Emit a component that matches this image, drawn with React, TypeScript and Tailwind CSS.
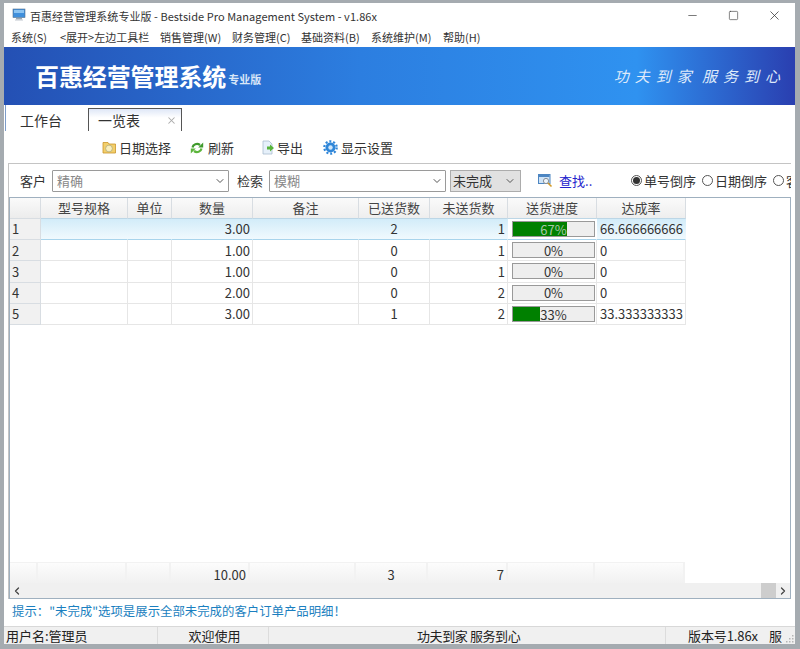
import { Minus, Square, X, ChevronDown, ChevronLeft, ChevronRight } from 'lucide-react';

const rows = [
  { no: 1, qty: '3.00', sent: 2, left: 1, pct: 67, rate: '66.666666666' },
  { no: 2, qty: '1.00', sent: 0, left: 1, pct: 0, rate: '0' },
  { no: 3, qty: '1.00', sent: 0, left: 1, pct: 0, rate: '0' },
  { no: 4, qty: '2.00', sent: 0, left: 2, pct: 0, rate: '0' },
  { no: 5, qty: '3.00', sent: 1, left: 2, pct: 33, rate: '33.333333333' },
];

const headers = ['型号规格', '单位', '数量', '备注', '已送货数', '未送货数', '送货进度', '达成率'];
const menus = [
  ['系统(S)', 'w-[49px]'],
  ['<展开>左边工具栏', 'w-[100px]'],
  ['销售管理(W)', 'w-[72px]'],
  ['财务管理(C)', 'w-[69px]'],
  ['基础资料(B)', 'w-[70px]'],
  ['系统维护(M)', 'w-[72px]'],
  ['帮助(H)', 'w-[50px]'],
];

const gridCols = 'grid grid-cols-[31px_87px_44px_81px_106px_71px_78px_89px_89px]';

function MonitorIcon() {
  return (
    <svg width="14" height="14" viewBox="0 0 14 14">
      <rect x="1" y="1" width="12" height="8.5" fill="#3f8fdc" stroke="#55708c" strokeWidth="0.6" />
      <rect x="2" y="2" width="10" height="3" fill="#8cc4f2" />
      <rect x="4" y="10" width="6" height="1.5" fill="#9aa7b4" />
      <rect x="3" y="11.5" width="8" height="1" fill="#c1c8cf" />
    </svg>
  );
}

function FolderIcon() {
  return (
    <svg width="15" height="15" viewBox="0 0 15 15">
      <path d="M1 2.5h5l1 1.5h6.5V13H1z" fill="#f3cf6a" stroke="#c9962c" strokeWidth="0.8" />
      <circle cx="7" cy="8.5" r="3.4" fill="#f9eebc" stroke="#b0a878" strokeWidth="0.8" />
    </svg>
  );
}

function RefreshIcon() {
  return (
    <svg width="14" height="14" viewBox="0 0 14 14" fill="none">
      <path d="M2.5 6.5C3 3.5 7 1.8 10 4" stroke="#3f9a2c" strokeWidth="2.2" />
      <path d="M8.2 6.5h5V1.5z" fill="#3f9a2c" />
      <path d="M11.5 7.5C11 10.5 7 12.2 4 10" stroke="#5cb53c" strokeWidth="2.2" />
      <path d="M5.8 7.5h-5v5z" fill="#5cb53c" />
    </svg>
  );
}

function ExportIcon() {
  return (
    <svg width="14" height="15" viewBox="0 0 14 15">
      <path d="M2 1h6l3 3v10H2z" fill="#e6f0fa" stroke="#a9bccf" strokeWidth="0.8" />
      <path d="M6 6.5h3V4.5l4 3.5-4 3.5v-2H6z" fill="#57b43a" />
    </svg>
  );
}

function GearIcon() {
  return (
    <svg width="15" height="15" viewBox="0 0 15 15">
      <circle cx="7.5" cy="7.5" r="5" fill="#2f86d8" />
      <circle cx="7.5" cy="7.5" r="6.2" fill="none" stroke="#2f86d8" strokeWidth="2.2" strokeDasharray="2 1.9" />
      <circle cx="7.5" cy="7.5" r="2.2" fill="#cfe6fa" />
    </svg>
  );
}

function FindIcon() {
  return (
    <svg width="15" height="15" viewBox="0 0 15 15" fill="none">
      <rect x="0.5" y="1.5" width="11.5" height="9" fill="#cfe3f6" stroke="#4d86c2" />
      <rect x="1" y="2" width="10.5" height="2" fill="#4d86c2" />
      <circle cx="8" cy="8" r="2.6" fill="#eef6fc" stroke="#8a8f96" />
      <path d="M10 10l3.5 3.5" stroke="#d49a2a" strokeWidth="1.6" />
    </svg>
  );
}

function SizeGrip() {
  return (
    <svg width="8" height="8" viewBox="0 0 8 8" fill="#b5b5b5">
      <rect x="6" y="0" width="1.5" height="1.5" />
      <rect x="3" y="3" width="1.5" height="1.5" />
      <rect x="6" y="3" width="1.5" height="1.5" />
      <rect x="0" y="6" width="1.5" height="1.5" />
      <rect x="3" y="6" width="1.5" height="1.5" />
      <rect x="6" y="6" width="1.5" height="1.5" />
    </svg>
  );
}

function Radio({ label, checked }: { label: string; checked?: boolean }) {
  return (
    <div className="flex items-center gap-[2px] shrink-0">
      <span className="w-[11px] h-[11px] rounded-full border border-[#555] bg-white flex items-center justify-center">
        {checked && <span className="w-[7px] h-[7px] rounded-full bg-[#333]" />}
      </span>
      <span>{label}</span>
    </div>
  );
}

function Progress({ pct }: { pct: number }) {
  return (
    <div className="relative ml-[4px] h-[16px] w-[83px] bg-[#eeeeee] border border-[#999]">
      <div className="h-full bg-[#008000]" style={{ width: `${pct}%` }} />
      <span className={`absolute inset-0 pt-[1px] flex items-center justify-center text-[13px] ${pct > 50 ? 'text-[#a8c8a8]' : 'text-[#333]'}`}>{pct}%</span>
    </div>
  );
}

export default function App() {
  return (
    <div className="w-[800px] h-[649px] overflow-hidden bg-[#a5abb0] pt-[3px] pb-[5px] pl-[4px] pr-[5px] text-[13px] text-[#222] font-['Noto_Sans_CJK_SC',sans-serif]">
      <div className="h-full flex flex-col bg-white">
        {/* title bar */}
        <div className="h-[24px] flex items-center shrink-0 bg-white">
          <div className="ml-[8px]"><MonitorIcon /></div>
          <span className="ml-[4px] pt-[2px] text-[11px] tracking-[0.05px] text-[#333]">百惠经营管理系统专业版 - Bestside Pro Management System - v1.86x</span>
          <div className="ml-auto flex items-center text-[#333]">
            <div className="w-[41px] flex justify-center"><Minus size={13} strokeWidth={1.2} /></div>
            <div className="w-[41px] flex justify-center"><Square size={11} strokeWidth={1.3} /></div>
            <div className="w-[41px] flex justify-center"><X size={15} strokeWidth={1.2} /></div>
          </div>
        </div>

        {/* menu */}
        <div className="h-[20px] flex items-center shrink-0 pl-[7px] pt-[1px] text-[11px] text-[#333]">
          {menus.map(([label, width]) => (
            <span key={label} className={width}>{label}</span>
          ))}
        </div>

        {/* banner */}
        <div className="h-[58px] shrink-0 flex items-center bg-[linear-gradient(90deg,#2450b4_0%,#2c7ee0_45%,#2f92f0_80%,#2a3fb0_100%)] text-white">
          <span className="ml-[31px] text-[24px] tracking-[-0.1px] leading-none font-bold">百惠经营管理系统</span>
          <span className="ml-[2px] mt-[6px] text-[11px] font-bold text-[#d8e6f8]">专业版</span>
          <span className="ml-auto mr-[9px] text-[15px] italic tracking-[6px] [word-spacing:-5px] text-[#dfeafa]">功夫到家 服务到心</span>
        </div>

        {/* tabs */}
        <div className="h-[26px] shrink-0 flex items-end pl-[1px] text-[14px]">
          <div className="h-[26px] w-[83px] flex items-center pl-[14px] pt-[4px] text-[#333] border-l border-[#7d9cc8]">工作台</div>
          <div className="h-[23px] w-[94px] flex items-center pl-[9px] border border-b-0 border-[#555] bg-[linear-gradient(180deg,#dfe7f7,#ffffff_40%)] text-[#333]">
            一览表
            <X size={11} strokeWidth={2.2} className="ml-auto mr-[4px] text-[#aaa]" />
          </div>
        </div>

        {/* toolbar */}
        <div className="h-[32px] shrink-0 flex items-center pt-[1px] text-[13px] text-[#333]">
          <div className="ml-[98px] flex items-center gap-[2px] w-[88px]"><FolderIcon />日期选择</div>
          <div className="flex items-center gap-[4px] w-[71px]"><RefreshIcon />刷新</div>
          <div className="flex items-center gap-[2px] w-[61px]"><ExportIcon />导出</div>
          <div className="ml-[1px] flex items-center gap-[3px]"><GearIcon />显示设置</div>
        </div>

        {/* filter + grid group */}
        <div className="flex-1 min-h-0 mx-[4px] flex flex-col border-t border-l border-[#c4c4c4] overflow-hidden">
          <div className="h-[33px] shrink-0 flex items-center text-[13px] overflow-hidden whitespace-nowrap">
            <span className="ml-[11px] text-[#333]">客户</span>
            <div className="ml-[6px] w-[177px] h-[22px] border border-[#9a9a9a] rounded-[1px] flex items-center pl-[4px] text-[#888] shrink-0">
              精确
              <ChevronDown size={12} className="ml-auto mr-[2px] text-[#555]" />
            </div>
            <span className="ml-[8px] text-[#333]">检索</span>
            <div className="ml-[6px] w-[177px] h-[22px] border border-[#9a9a9a] rounded-[1px] flex items-center pl-[4px] text-[#888] shrink-0">
              模糊
              <ChevronDown size={12} className="ml-auto mr-[2px] text-[#555]" />
            </div>
            <div className="ml-[4px] w-[71px] h-[22px] border border-[#acacac] bg-[#e1e1e1] flex items-center pl-[2px] text-[#333] shrink-0">
              未完成
              <ChevronDown size={12} className="ml-auto mr-[4px] text-[#555]" />
            </div>
            <div className="ml-[17px] shrink-0"><FindIcon /></div>
            <span className="ml-[6px] text-[#2222cc] shrink-0 w-[39px]">查找..</span>
            <div className="ml-[33px] flex items-center gap-[6px] text-[#333]">
              <Radio label="单号倒序" checked />
              <Radio label="日期倒序" />
              <Radio label="客" />
            </div>
          </div>

          {/* grid */}
          <div className="flex-1 min-h-0 flex flex-col bg-white border border-[#9fb0bf] text-[13px] text-[#333]">
            <div className={`${gridCols} h-[21px] shrink-0 w-max`}>
              <div className="bg-[linear-gradient(180deg,#fafafa,#ececec)] border-r border-b border-[#d8dde2]" />
              {headers.map((h) => (
                <div key={h} className="flex items-center justify-center text-[#444] bg-[linear-gradient(180deg,#fafafa,#eeeeee)] border-r border-b border-r-[#d8dde2] border-b-[#bcd6e6]">{h}</div>
              ))}
            </div>
            {rows.map((r) => {
              const selected = r.no === 1;
              const cell = `border-r border-b ${selected ? 'border-r-transparent border-b-[#a8d4ec]' : 'border-[#e6e6e6]'}`;
              return (
                <div key={r.no} className={`${gridCols} h-[21.2px] shrink-0 w-max ${selected ? 'bg-[linear-gradient(180deg,#d2ecf9,#f2fafe)]' : ''}`}>
                  <div className="flex items-center pl-[2px] bg-[#f1f1f1] border-r border-b border-[#d8dde2]">{r.no}</div>
                  <div className={cell} />
                  <div className={cell} />
                  <div className={`${cell} flex items-center justify-end pr-[2px]`}>{r.qty}</div>
                  <div className={cell} />
                  <div className={`${cell} flex items-center justify-center`}>{r.sent}</div>
                  <div className={`${cell} flex items-center justify-end pr-[2px]`}>{r.left}</div>
                  <div className={`${cell} flex items-center ${selected ? 'bg-white' : ''}`}><Progress pct={r.pct} /></div>
                  <div className={`${cell} flex items-center pl-[3px] overflow-hidden whitespace-nowrap ${selected ? 'border-r-[#a8d4ec]' : ''}`}>{r.rate}</div>
                </div>
              );
            })}
            <div className="flex-1" />
            {/* totals */}
            <div className="h-[21px] shrink-0 grid grid-cols-[28px_89px_44px_79px_106px_72px_80px_87px_90px] w-max">
              {['', '', '', '10.00', '', '3', '7', '', ''].map((v, i) => (
                <div key={i} className={`flex items-center pt-[2px] bg-[linear-gradient(180deg,#fcfcfc,#f0f0f0)] border-r-2 border-t border-[#f2f2f2] ${v === '3' ? 'justify-center' : 'justify-end pr-[2px]'}`}>{v}</div>
              ))}
            </div>
            {/* scrollbar */}
            <div className="h-[15px] shrink-0 flex items-center bg-[#f0f0f0] text-[#444]">
              <ChevronLeft size={12} strokeWidth={2.5} className="ml-[1px]" />
              <div className="ml-auto w-[15px] h-full bg-[#cdcdcd]" />
              <ChevronRight size={12} strokeWidth={2.5} className="mx-[1px]" />
            </div>
          </div>
        </div>

        {/* hint */}
        <div className="h-[27px] shrink-0 flex items-center pl-[8px] pb-[2px] text-[12.4px] text-[#1b7fc0]">
          提示："未完成"选项是展示全部未完成的客户订单产品明细！
        </div>

        {/* status bar */}
        <div className="relative h-[18px] shrink-0 flex items-center bg-[#f0f0f0] border-t border-[#d8d8d8] text-[13px] text-[#222] whitespace-nowrap overflow-hidden">
          <div className="w-[154px] pl-[2px] border-r border-[#dcdcdc]">用户名:管理员</div>
          <div className="w-[111px] pl-[3px] text-center border-r border-[#dcdcdc]">欢迎使用</div>
          <div className="w-[397px] pl-[148px] tracking-[-0.4px] border-r border-[#dcdcdc]">功夫到家 服务到心</div>
          <div className="pl-[22px] tracking-[-0.1px]">版本号1.86x</div>
          <div className="pl-[11px]">服</div>
          <div className="absolute right-[1px] bottom-[1px] flex"><SizeGrip /></div>
        </div>
      </div>
    </div>
  );
}
